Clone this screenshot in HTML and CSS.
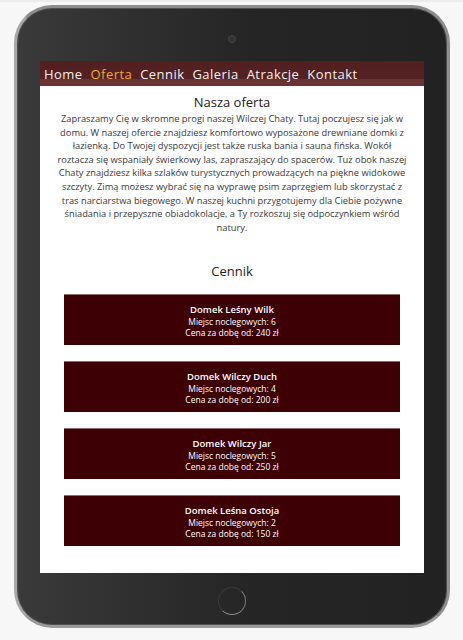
FILE: index.html
```html
<!DOCTYPE html>
<html lang="pl">
<head>
<meta charset="utf-8">
<title>Wilcza Chata</title>
<link rel="stylesheet" href="styles.css">
</head>
<body>
<div class="topline"></div>
<div class="tablet">
  <div class="camera"></div>
  <div class="screen">
    <nav class="nav">
      <a class="nav-item">Home</a>
      <a class="nav-item active">Oferta</a>
      <a class="nav-item">Cennik</a>
      <a class="nav-item">Galeria</a>
      <a class="nav-item">Atrakcje</a>
      <a class="nav-item">Kontakt</a>
    </nav>
    <main class="content">
      <h2 class="title">Nasza oferta</h2>
      <p class="text">Zapraszamy Cię w skromne progi naszej Wilczej Chaty. Tutaj poczujesz się jak w<br>domu. W naszej ofercie znajdziesz komfortowo wyposażone drewniane domki z<br>łazienką. Do Twojej dyspozycji jest także ruska bania i sauna fińska. Wokół<br>roztacza się wspaniały świerkowy las, zapraszający do spacerów. Tuż obok naszej<br>Chaty znajdziesz kilka szlaków turystycznych prowadzących na piękne widokowe<br>szczyty. Zimą możesz wybrać się na wyprawę psim zaprzęgiem lub skorzystać z<br>tras narciarstwa biegowego. W naszej kuchni przygotujemy dla Ciebie pożywne<br>śniadania i przepyszne obiadokolacje, a Ty rozkoszuj się odpoczynkiem wśród<br>natury.</p>
      <h2 class="title title-price">Cennik</h2>
      <div class="cards">
        <div class="card">
          <div class="card-name">Domek Leśny Wilk</div>
          <div class="card-line">Miejsc noclegowych: 6</div>
          <div class="card-line">Cena za dobę od: 240 zł</div>
        </div>
        <div class="card">
          <div class="card-name">Domek Wilczy Duch</div>
          <div class="card-line">Miejsc noclegowych: 4</div>
          <div class="card-line">Cena za dobę od: 200 zł</div>
        </div>
        <div class="card">
          <div class="card-name">Domek Wilczy Jar</div>
          <div class="card-line">Miejsc noclegowych: 5</div>
          <div class="card-line">Cena za dobę od: 250 zł</div>
        </div>
        <div class="card">
          <div class="card-name">Domek Leśna Ostoja</div>
          <div class="card-line">Miejsc noclegowych: 2</div>
          <div class="card-line">Cena za dobę od: 150 zł</div>
        </div>
      </div>
    </main>
  </div>
  <div class="home-button"></div>
</div>
</body>
</html>
```
FILE: styles.css
```css
html, body {
  margin: 0;
  padding: 0;
}
body {
  background: #f7f7f7;
  font-family: "Open Sans", "Liberation Sans", sans-serif;
  width: 463px;
  height: 640px;
  overflow: hidden;
}
.topline {
  height: 2px;
  background: #ececec;
}
.tablet {
  box-sizing: border-box;
  margin: 3px 0 0 14px;
  width: 436px;
  height: 623px;
  border-radius: 38px;
  border: 3px solid #8e8e8e;
  border-left-color: #a8a8a8;
  border-bottom-color: #9a9a9a;
  background: linear-gradient(to right, #3a3a3a 0%, #303030 25%, #252525 55%, #222222 100%);
  box-shadow: inset 0 0 0 1px #505050;
  display: flex;
  flex-direction: column;
  align-items: center;
}
.camera {
  width: 6px;
  height: 6px;
  border-radius: 50%;
  background: #333;
  border: 1px solid #444;
  margin-top: 27px;
  margin-bottom: 18px;
}
.screen {
  width: 384px;
  height: 512px;
  background: #fff;
  overflow: hidden;
}
.nav {
  height: 25px;
  background: linear-gradient(#521f20 0, #552223 70%, #693233 70%, #693233 100%);
  display: flex;
  gap: 8px;
  padding: 0 0 0 4px;
  align-items: flex-start;
}
.nav-item {
  color: #f6f0f0;
  font-size: 13px;
  letter-spacing: 0.45px;
  line-height: 26px;
}
.nav-item.active {
  color: #f2a73a;
}
.content {
  padding: 8px 0 0;
}
.title {
  margin: 0;
  font-size: 13px;
  font-weight: 400;
  color: #222;
  text-align: center;
  line-height: 16px;
}
.text {
  margin: 2px 0 0;
  padding: 0 4px;
  font-size: 9.3px;
  line-height: 13.6px;
  color: #383838;
  text-align: center;
}
.title-price {
  margin-top: 29px;
}
.cards {
  margin: 15px 24px 0;
  display: flex;
  flex-direction: column;
  gap: 16px;
}
.card {
  height: 51px;
  box-sizing: border-box;
  background: #3c0005;
  border-top: 1px solid #8c6c6c;
  color: #fff;
  text-align: center;
  padding-top: 9px;
}
.card-name {
  font-size: 9.5px;
  font-weight: 600;
  line-height: 12px;
}
.card-line {
  font-size: 8.5px;
  line-height: 11px;
}
.home-button {
  box-sizing: border-box;
  width: 28px;
  height: 28px;
  border-radius: 50%;
  margin-top: 14px;
  border: 1.5px solid #3a3a3a;
  border-right-color: #7a7a7a;
  border-bottom-color: #8a8a8a;
}
```
